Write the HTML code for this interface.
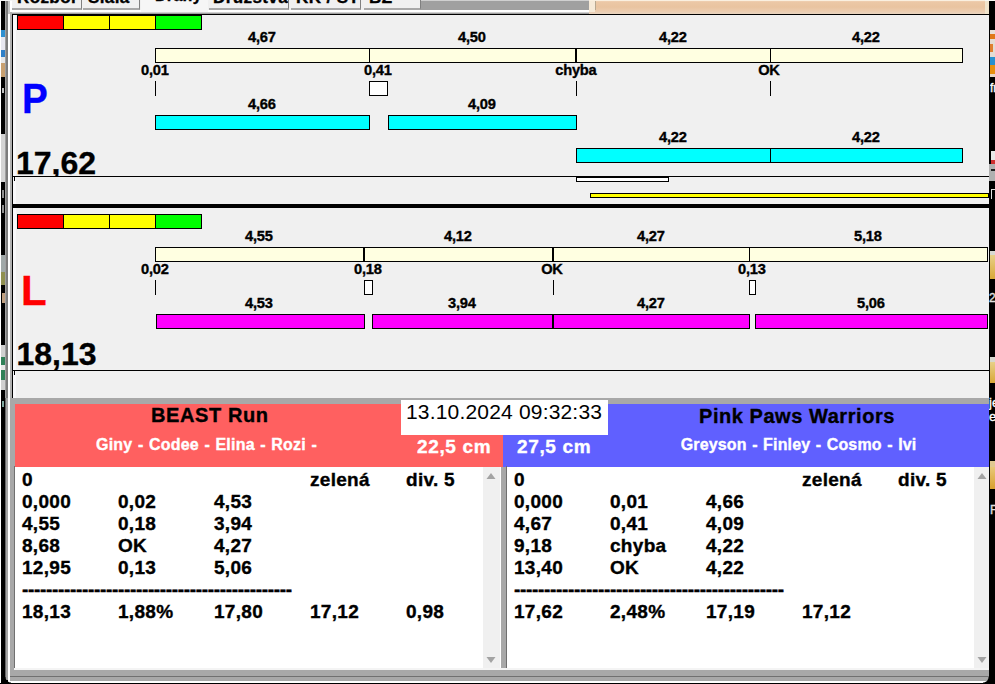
<!DOCTYPE html>
<html><head><meta charset="utf-8"><title>UI</title>
<style>
html,body{margin:0;padding:0;background:#f0f0f0;overflow:hidden}
body{width:995px;height:684px;position:relative;font-family:"Liberation Sans",sans-serif}
.k{position:absolute;background:#000}
.b{position:absolute;box-sizing:border-box;border:1px solid #000}
.t{position:absolute;font-family:"Liberation Sans",sans-serif;white-space:nowrap;-webkit-text-stroke:0.35px currentColor}
</style></head><body>
<div class="k" style="left:0;top:0;width:995px;height:684px;background:#f0f0f0"></div>
<div class="k" style="left:0;top:0;width:1px;height:684px;background:#fff"></div>
<div class="k" style="left:1px;top:0;width:4px;height:684px;background:#000"></div>
<div class="k" style="left:5px;top:0;width:1px;height:684px;background:#a0a0a0"></div>
<div class="k" style="left:6px;top:0;width:2px;height:684px;background:#7c7c7c"></div>
<div class="k" style="left:5px;top:398px;width:1px;height:286px;background:#686868"></div>
<div class="k" style="left:6px;top:398px;width:2px;height:286px;background:#a4a4a4"></div>
<div class="k" style="left:8px;top:0;width:2px;height:684px;background:#fff"></div>
<div class="k" style="left:10px;top:0;width:2px;height:684px;background:#b0b0b0"></div>
<div class="k" style="left:8px;top:0;width:2px;height:14px;background:#c4c4c4"></div>
<div class="k" style="left:10px;top:0;width:2px;height:12px;background:#fff"></div>
<div class="k" style="left:989px;top:0;width:6px;height:684px;background:#000"></div>
<div class="k" style="left:12px;top:0;width:977px;height:10px;background:#f0f0f0"></div>
<div class="k" style="left:12px;top:10px;width:977px;height:2px;background:#fff"></div>
<div class="k" style="left:12px;top:12px;width:977px;height:1px;background:#d0d0d0"></div>
<div class="k" style="left:12px;top:13px;width:977px;height:1px;background:#a0a0a0"></div>
<div class="k" style="left:421px;top:0;width:168px;height:10px;background:#a0a0a0"></div>
<div class="k" style="left:589px;top:0;width:400px;height:14px;background:linear-gradient(#f4dcc4 0,#ecc8a6 2px,#e9c4a0 7px,#ecccae 11px,#e8d4c0 14px)"></div>
<div class="k" style="left:589px;top:0;width:6px;height:12px;background:#f6ead8"></div>
<div class="k" style="left:595px;top:1px;width:1px;height:9px;background:#b8a890"></div>
<div class="k" style="left:12px;top:0;width:70px;height:10px;background:#f0f0f0;overflow:hidden;box-sizing:border-box;border-right:1px solid #808080;border-bottom:2px solid #a8a8a8"><div class="t" style="left:5px;top:-10.69px;font-size:17px;line-height:17px;letter-spacing:0.4px;font-weight:bold;color:#000">Rozbor</div></div>
<div class="k" style="left:83px;top:0;width:57px;height:10px;background:#f0f0f0;overflow:hidden;box-sizing:border-box;border-right:1px solid #808080;border-bottom:2px solid #a8a8a8"><div class="t" style="left:5px;top:-10.69px;font-size:17px;line-height:17px;letter-spacing:0.4px;font-weight:bold;color:#000">Síala</div></div>
<div class="k" style="left:141px;top:0;width:67px;height:12px;background:#f6f6f6;overflow:hidden"><div class="t" style="left:14px;top:-11.84px;font-size:16px;line-height:16px;letter-spacing:0.3px;font-weight:bold;color:#000">Dráhy</div></div>
<div class="k" style="left:209px;top:0;width:80px;height:10px;background:#f0f0f0;overflow:hidden;box-sizing:border-box;border-right:1px solid #808080;border-bottom:2px solid #a8a8a8"><div class="t" style="left:4px;top:-10.69px;font-size:17px;line-height:17px;letter-spacing:0.4px;font-weight:bold;color:#000">Družstva</div></div>
<div class="k" style="left:291px;top:0;width:70px;height:10px;background:#f0f0f0;overflow:hidden;box-sizing:border-box;border-right:1px solid #808080;border-bottom:2px solid #a8a8a8"><div class="t" style="left:5px;top:-10.69px;font-size:17px;line-height:17px;letter-spacing:0.4px;font-weight:bold;color:#000">KK / ST</div></div>
<div class="k" style="left:364px;top:0;width:57px;height:10px;background:#f0f0f0;overflow:hidden;box-sizing:border-box;border-right:1px solid #808080;border-bottom:2px solid #a8a8a8"><div class="t" style="left:5px;top:-10.69px;font-size:17px;line-height:17px;letter-spacing:0.4px;font-weight:bold;color:#000">BZ</div></div>
<div class="k" style="left:12px;top:14px;width:977px;height:1px;background:#000"></div>
<div class="k" style="left:12px;top:14px;width:1px;height:384px"></div>
<div class="k" style="left:13px;top:15px;width:3px;height:383px;background:#f8f8fa"></div>
<div class="b" style="left:17px;top:15px;width:185px;height:15px;background:#ffff00;"></div><div class="k" style="left:18px;top:16px;width:45px;height:13px;background:#ff0000"></div><div class="k" style="left:63px;top:15px;width:1px;height:15px"></div><div class="k" style="left:156px;top:16px;width:45px;height:13px;background:#00ff00"></div><div class="k" style="left:109px;top:15px;width:1px;height:15px"></div><div class="k" style="left:155px;top:15px;width:1px;height:15px"></div>
<div class="b" style="left:155px;top:48px;width:808px;height:15px;background:#ffffe1;"></div>
<div class="k" style="left:369px;top:48px;width:1px;height:15px"></div>
<div class="k" style="left:770px;top:48px;width:1px;height:15px"></div>
<div class="k" style="left:575px;top:48px;width:2px;height:15px"></div>
<div class="t" style="left:61.875px;width:400px;letter-spacing:-0.25px;top:29.98px;font-size:14.67px;line-height:14.67px;height:20.67px;color:#000;font-weight:bold;text-align:center">4,67</div>
<div class="t" style="left:271.875px;width:400px;letter-spacing:-0.25px;top:29.98px;font-size:14.67px;line-height:14.67px;height:20.67px;color:#000;font-weight:bold;text-align:center">4,50</div>
<div class="t" style="left:472.875px;width:400px;letter-spacing:-0.25px;top:29.98px;font-size:14.67px;line-height:14.67px;height:20.67px;color:#000;font-weight:bold;text-align:center">4,22</div>
<div class="t" style="left:665.875px;width:400px;letter-spacing:-0.25px;top:29.98px;font-size:14.67px;line-height:14.67px;height:20.67px;color:#000;font-weight:bold;text-align:center">4,22</div>
<div class="t" style="left:-45.125px;width:400px;letter-spacing:-0.25px;top:62.98px;font-size:14.67px;line-height:14.67px;height:20.67px;color:#000;font-weight:bold;text-align:center">0,01</div>
<div class="t" style="left:177.875px;width:400px;letter-spacing:-0.25px;top:62.98px;font-size:14.67px;line-height:14.67px;height:20.67px;color:#000;font-weight:bold;text-align:center">0,41</div>
<div class="t" style="left:375.875px;width:400px;letter-spacing:-0.25px;top:62.98px;font-size:14.67px;line-height:14.67px;height:20.67px;color:#000;font-weight:bold;text-align:center">chyba</div>
<div class="t" style="left:568.875px;width:400px;letter-spacing:-0.25px;top:62.98px;font-size:14.67px;line-height:14.67px;height:20.67px;color:#000;font-weight:bold;text-align:center">OK</div>
<div class="k" style="left:155px;top:81px;width:1px;height:15px"></div>
<div class="k" style="left:576px;top:81px;width:1px;height:15px"></div>
<div class="k" style="left:770px;top:81px;width:1px;height:15px"></div>
<div class="b" style="left:369px;top:81px;width:19px;height:15px;background:#fff;"></div>
<div class="t" style="transform:scaleX(0.92);transform-origin:0 0;letter-spacing:0px;left:21.5px;top:78.45px;font-size:42px;line-height:42px;height:50px;color:#0000ff;font-weight:bold;white-space:pre">P</div>
<div class="t" style="left:61.875px;width:400px;letter-spacing:-0.25px;top:96.98px;font-size:14.67px;line-height:14.67px;height:20.67px;color:#000;font-weight:bold;text-align:center">4,66</div>
<div class="t" style="left:281.875px;width:400px;letter-spacing:-0.25px;top:96.98px;font-size:14.67px;line-height:14.67px;height:20.67px;color:#000;font-weight:bold;text-align:center">4,09</div>
<div class="b" style="left:155px;top:115px;width:215px;height:15px;background:#00ffff;"></div>
<div class="b" style="left:388px;top:115px;width:189px;height:15px;background:#00ffff;"></div>
<div class="t" style="left:472.875px;width:400px;letter-spacing:-0.25px;top:129.98px;font-size:14.67px;line-height:14.67px;height:20.67px;color:#000;font-weight:bold;text-align:center">4,22</div>
<div class="t" style="left:665.875px;width:400px;letter-spacing:-0.25px;top:129.98px;font-size:14.67px;line-height:14.67px;height:20.67px;color:#000;font-weight:bold;text-align:center">4,22</div>
<div class="b" style="left:576px;top:148px;width:387px;height:15px;background:#00ffff;"></div>
<div class="k" style="left:770px;top:148px;width:1px;height:15px"></div>
<div class="k" style="left:13px;top:140px;width:200px;height:36px;background:none;overflow:hidden"><div class="t" style="letter-spacing:0px;left:3px;top:6.91px;font-size:32px;line-height:32px;height:40px;color:#000;font-weight:bold;white-space:pre">17,62</div></div>
<div class="k" style="left:13px;top:176px;width:976px;height:1px;background:#000"></div>
<div class="k" style="left:14px;top:177px;width:1px;height:4px"></div>
<div class="b" style="left:576px;top:177px;width:93px;height:5px;background:#fff;"></div>
<div class="b" style="left:590px;top:193px;width:399px;height:5px;background:#ffff00;"></div>
<div class="k" style="left:12px;top:204px;width:977px;height:4px;background:#000"></div>
<div class="b" style="left:17px;top:214px;width:185px;height:15px;background:#ffff00;"></div><div class="k" style="left:18px;top:215px;width:45px;height:13px;background:#ff0000"></div><div class="k" style="left:63px;top:214px;width:1px;height:15px"></div><div class="k" style="left:156px;top:215px;width:45px;height:13px;background:#00ff00"></div><div class="k" style="left:109px;top:214px;width:1px;height:15px"></div><div class="k" style="left:155px;top:214px;width:1px;height:15px"></div>
<div class="b" style="left:155px;top:247px;width:833px;height:15px;background:#ffffe1;"></div>
<div class="k" style="left:363px;top:247px;width:2px;height:15px"></div>
<div class="k" style="left:552px;top:247px;width:2px;height:15px"></div>
<div class="k" style="left:749px;top:247px;width:1px;height:15px"></div>
<div class="t" style="left:58.875px;width:400px;letter-spacing:-0.25px;top:228.98px;font-size:14.67px;line-height:14.67px;height:20.67px;color:#000;font-weight:bold;text-align:center">4,55</div>
<div class="t" style="left:257.875px;width:400px;letter-spacing:-0.25px;top:228.98px;font-size:14.67px;line-height:14.67px;height:20.67px;color:#000;font-weight:bold;text-align:center">4,12</div>
<div class="t" style="left:450.875px;width:400px;letter-spacing:-0.25px;top:228.98px;font-size:14.67px;line-height:14.67px;height:20.67px;color:#000;font-weight:bold;text-align:center">4,27</div>
<div class="t" style="left:667.875px;width:400px;letter-spacing:-0.25px;top:228.98px;font-size:14.67px;line-height:14.67px;height:20.67px;color:#000;font-weight:bold;text-align:center">5,18</div>
<div class="t" style="left:-45.125px;width:400px;letter-spacing:-0.25px;top:261.98px;font-size:14.67px;line-height:14.67px;height:20.67px;color:#000;font-weight:bold;text-align:center">0,02</div>
<div class="t" style="left:167.875px;width:400px;letter-spacing:-0.25px;top:261.98px;font-size:14.67px;line-height:14.67px;height:20.67px;color:#000;font-weight:bold;text-align:center">0,18</div>
<div class="t" style="left:351.875px;width:400px;letter-spacing:-0.25px;top:261.98px;font-size:14.67px;line-height:14.67px;height:20.67px;color:#000;font-weight:bold;text-align:center">OK</div>
<div class="t" style="left:551.875px;width:400px;letter-spacing:-0.25px;top:261.98px;font-size:14.67px;line-height:14.67px;height:20.67px;color:#000;font-weight:bold;text-align:center">0,13</div>
<div class="k" style="left:155px;top:280px;width:1px;height:15px"></div>
<div class="k" style="left:553px;top:280px;width:1px;height:15px"></div>
<div class="b" style="left:364px;top:280px;width:9px;height:15px;background:#fff;"></div>
<div class="b" style="left:749px;top:280px;width:7px;height:15px;background:#fff;"></div>
<div class="t" style="letter-spacing:0px;left:21px;top:270.45px;font-size:42px;line-height:42px;height:50px;color:#ff0000;font-weight:bold;white-space:pre">L</div>
<div class="t" style="left:58.875px;width:400px;letter-spacing:-0.25px;top:295.98px;font-size:14.67px;line-height:14.67px;height:20.67px;color:#000;font-weight:bold;text-align:center">4,53</div>
<div class="t" style="left:261.875px;width:400px;letter-spacing:-0.25px;top:295.98px;font-size:14.67px;line-height:14.67px;height:20.67px;color:#000;font-weight:bold;text-align:center">3,94</div>
<div class="t" style="left:450.875px;width:400px;letter-spacing:-0.25px;top:295.98px;font-size:14.67px;line-height:14.67px;height:20.67px;color:#000;font-weight:bold;text-align:center">4,27</div>
<div class="t" style="left:670.875px;width:400px;letter-spacing:-0.25px;top:295.98px;font-size:14.67px;line-height:14.67px;height:20.67px;color:#000;font-weight:bold;text-align:center">5,06</div>
<div class="b" style="left:156px;top:314px;width:209px;height:15px;background:#ff00ff;"></div>
<div class="b" style="left:372px;top:314px;width:378px;height:15px;background:#ff00ff;"></div>
<div class="k" style="left:552px;top:314px;width:2px;height:15px"></div>
<div class="b" style="left:755px;top:314px;width:233px;height:15px;background:#ff00ff;"></div>
<div class="t" style="letter-spacing:0px;left:16.5px;top:337.91px;font-size:32px;line-height:32px;height:40px;color:#000;font-weight:bold;white-space:pre">18,13</div>
<div class="k" style="left:13px;top:370px;width:976px;height:1px;background:#000"></div>
<div class="k" style="left:14px;top:371px;width:1px;height:4px"></div>
<div class="k" style="left:10px;top:398px;width:979px;height:286px;background:#a8a8a8"></div>
<div class="k" style="left:15px;top:404px;width:488px;height:63px;background:#ff6060"></div>
<div class="k" style="left:503px;top:404px;width:486px;height:63px;background:#6060ff"></div>
<div class="k" style="left:401px;top:400px;width:207px;height:35px;background:#fff"></div>
<div class="t" style="-webkit-text-stroke:0;letter-spacing:0.18px;left:406px;top:401.22px;font-size:21px;line-height:21px;height:29px;color:#000;font-weight:normal;white-space:pre">13.10.2024 09:32:33</div>
<div class="t" style="left:9.8px;width:400px;letter-spacing:0.6px;top:405.07px;font-size:20px;line-height:20px;height:26px;color:#000;font-weight:bold;text-align:center">BEAST Run</div>
<div class="t" style="left:596.975px;width:400px;letter-spacing:0.55px;top:405.57px;font-size:20px;line-height:20px;height:26px;color:#000;font-weight:bold;text-align:center">Pink Paws Warriors</div>
<div class="t" style="word-spacing:0.9px;left:6.500000000000005px;width:400px;letter-spacing:0.2px;top:436.66px;font-size:16px;line-height:16px;height:22px;color:#fff;font-weight:bold;text-align:center">Giny - Codee - Elina - Rozi -</div>
<div class="t" style="word-spacing:0.9px;left:598.575px;width:400px;letter-spacing:0.15px;top:436.66px;font-size:16px;line-height:16px;height:22px;color:#fff;font-weight:bold;text-align:center">Greyson - Finley - Cosmo - Ivi</div>
<div class="t" style="letter-spacing:0.65px;left:417px;top:437.42px;font-size:19px;line-height:19px;height:27px;color:#fff;font-weight:bold;white-space:pre">22,5 cm</div>
<div class="t" style="letter-spacing:0.65px;left:517px;top:437.42px;font-size:19px;line-height:19px;height:27px;color:#fff;font-weight:bold;white-space:pre">27,5 cm</div>
<div class="k" style="left:14px;top:466px;width:1px;height:203px;background:#707070"></div>
<div class="k" style="left:15px;top:467px;width:486px;height:201px;background:#fff"></div>
<div class="k" style="left:506px;top:466px;width:1px;height:203px;background:#707070"></div>
<div class="k" style="left:507px;top:467px;width:482px;height:201px;background:#fff"></div>
<div class="k" style="left:14px;top:668px;width:975px;height:2px;background:#f4f4f4"></div>
<div class="k" style="left:10px;top:676px;width:979px;height:1px;background:#707070"></div>
<div class="k" style="left:8px;top:681px;width:981px;height:2px;background:#fff"></div>
<div class="k" style="left:0px;top:683px;width:995px;height:1px;background:#000"></div>
<div class="k" style="left:5px;top:680px;width:3px;height:3px;background:#000"></div>
<div class="k" style="left:483px;top:467px;width:17px;height:201px;background:#f0f0f0"></div><svg class="k" style="left:483px;top:467px;background:none" width="17" height="201"><path d="M3.5 12 L8 6 L12.5 12 Z" fill="#a3a3a3"/><path d="M3.5 190 L8 196 L12.5 190 Z" fill="#a3a3a3"/></svg>
<div class="k" style="left:974px;top:467px;width:17px;height:201px;background:#f0f0f0"></div><svg class="k" style="left:974px;top:467px;background:none" width="17" height="201"><path d="M3.5 12 L8 6 L12.5 12 Z" fill="#a3a3a3"/><path d="M3.5 190 L8 196 L12.5 190 Z" fill="#a3a3a3"/></svg>
<div class="t" style="letter-spacing:0.3px;left:22px;top:469.92px;font-size:19px;line-height:19px;height:27px;color:#000;font-weight:bold;white-space:pre">0</div><div class="t" style="letter-spacing:0.3px;left:310px;top:469.92px;font-size:19px;line-height:19px;height:27px;color:#000;font-weight:bold;white-space:pre">zelená</div><div class="t" style="letter-spacing:0.3px;left:406px;top:469.92px;font-size:19px;line-height:19px;height:27px;color:#000;font-weight:bold;white-space:pre">div. 5</div><div class="t" style="letter-spacing:0.3px;left:22px;top:491.92px;font-size:19px;line-height:19px;height:27px;color:#000;font-weight:bold;white-space:pre">0,000</div><div class="t" style="letter-spacing:0.3px;left:118px;top:491.92px;font-size:19px;line-height:19px;height:27px;color:#000;font-weight:bold;white-space:pre">0,02</div><div class="t" style="letter-spacing:0.3px;left:214px;top:491.92px;font-size:19px;line-height:19px;height:27px;color:#000;font-weight:bold;white-space:pre">4,53</div><div class="t" style="letter-spacing:0.3px;left:22px;top:513.92px;font-size:19px;line-height:19px;height:27px;color:#000;font-weight:bold;white-space:pre">4,55</div><div class="t" style="letter-spacing:0.3px;left:118px;top:513.92px;font-size:19px;line-height:19px;height:27px;color:#000;font-weight:bold;white-space:pre">0,18</div><div class="t" style="letter-spacing:0.3px;left:214px;top:513.92px;font-size:19px;line-height:19px;height:27px;color:#000;font-weight:bold;white-space:pre">3,94</div><div class="t" style="letter-spacing:0.3px;left:22px;top:535.92px;font-size:19px;line-height:19px;height:27px;color:#000;font-weight:bold;white-space:pre">8,68</div><div class="t" style="letter-spacing:0.3px;left:118px;top:535.92px;font-size:19px;line-height:19px;height:27px;color:#000;font-weight:bold;white-space:pre">OK</div><div class="t" style="letter-spacing:0.3px;left:214px;top:535.92px;font-size:19px;line-height:19px;height:27px;color:#000;font-weight:bold;white-space:pre">4,27</div><div class="t" style="letter-spacing:0.3px;left:22px;top:557.92px;font-size:19px;line-height:19px;height:27px;color:#000;font-weight:bold;white-space:pre">12,95</div><div class="t" style="letter-spacing:0.3px;left:118px;top:557.92px;font-size:19px;line-height:19px;height:27px;color:#000;font-weight:bold;white-space:pre">0,13</div><div class="t" style="letter-spacing:0.3px;left:214px;top:557.92px;font-size:19px;line-height:19px;height:27px;color:#000;font-weight:bold;white-space:pre">5,06</div><div class="t" style="letter-spacing:-0.333px;left:22px;top:579.92px;font-size:19px;line-height:19px;height:27px;color:#000;font-weight:bold;white-space:pre">---------------------------------------------</div><div class="t" style="letter-spacing:0.3px;left:22px;top:601.92px;font-size:19px;line-height:19px;height:27px;color:#000;font-weight:bold;white-space:pre">18,13</div><div class="t" style="letter-spacing:0.3px;left:118px;top:601.92px;font-size:19px;line-height:19px;height:27px;color:#000;font-weight:bold;white-space:pre">1,88%</div><div class="t" style="letter-spacing:0.3px;left:214px;top:601.92px;font-size:19px;line-height:19px;height:27px;color:#000;font-weight:bold;white-space:pre">17,80</div><div class="t" style="letter-spacing:0.3px;left:310px;top:601.92px;font-size:19px;line-height:19px;height:27px;color:#000;font-weight:bold;white-space:pre">17,12</div><div class="t" style="letter-spacing:0.3px;left:406px;top:601.92px;font-size:19px;line-height:19px;height:27px;color:#000;font-weight:bold;white-space:pre">0,98</div>
<div class="t" style="letter-spacing:0.3px;left:514px;top:469.92px;font-size:19px;line-height:19px;height:27px;color:#000;font-weight:bold;white-space:pre">0</div><div class="t" style="letter-spacing:0.3px;left:802px;top:469.92px;font-size:19px;line-height:19px;height:27px;color:#000;font-weight:bold;white-space:pre">zelená</div><div class="t" style="letter-spacing:0.3px;left:898px;top:469.92px;font-size:19px;line-height:19px;height:27px;color:#000;font-weight:bold;white-space:pre">div. 5</div><div class="t" style="letter-spacing:0.3px;left:514px;top:491.92px;font-size:19px;line-height:19px;height:27px;color:#000;font-weight:bold;white-space:pre">0,000</div><div class="t" style="letter-spacing:0.3px;left:610px;top:491.92px;font-size:19px;line-height:19px;height:27px;color:#000;font-weight:bold;white-space:pre">0,01</div><div class="t" style="letter-spacing:0.3px;left:706px;top:491.92px;font-size:19px;line-height:19px;height:27px;color:#000;font-weight:bold;white-space:pre">4,66</div><div class="t" style="letter-spacing:0.3px;left:514px;top:513.92px;font-size:19px;line-height:19px;height:27px;color:#000;font-weight:bold;white-space:pre">4,67</div><div class="t" style="letter-spacing:0.3px;left:610px;top:513.92px;font-size:19px;line-height:19px;height:27px;color:#000;font-weight:bold;white-space:pre">0,41</div><div class="t" style="letter-spacing:0.3px;left:706px;top:513.92px;font-size:19px;line-height:19px;height:27px;color:#000;font-weight:bold;white-space:pre">4,09</div><div class="t" style="letter-spacing:0.3px;left:514px;top:535.92px;font-size:19px;line-height:19px;height:27px;color:#000;font-weight:bold;white-space:pre">9,18</div><div class="t" style="letter-spacing:0.3px;left:610px;top:535.92px;font-size:19px;line-height:19px;height:27px;color:#000;font-weight:bold;white-space:pre">chyba</div><div class="t" style="letter-spacing:0.3px;left:706px;top:535.92px;font-size:19px;line-height:19px;height:27px;color:#000;font-weight:bold;white-space:pre">4,22</div><div class="t" style="letter-spacing:0.3px;left:514px;top:557.92px;font-size:19px;line-height:19px;height:27px;color:#000;font-weight:bold;white-space:pre">13,40</div><div class="t" style="letter-spacing:0.3px;left:610px;top:557.92px;font-size:19px;line-height:19px;height:27px;color:#000;font-weight:bold;white-space:pre">OK</div><div class="t" style="letter-spacing:0.3px;left:706px;top:557.92px;font-size:19px;line-height:19px;height:27px;color:#000;font-weight:bold;white-space:pre">4,22</div><div class="t" style="letter-spacing:-0.333px;left:514px;top:579.92px;font-size:19px;line-height:19px;height:27px;color:#000;font-weight:bold;white-space:pre">---------------------------------------------</div><div class="t" style="letter-spacing:0.3px;left:514px;top:601.92px;font-size:19px;line-height:19px;height:27px;color:#000;font-weight:bold;white-space:pre">17,62</div><div class="t" style="letter-spacing:0.3px;left:610px;top:601.92px;font-size:19px;line-height:19px;height:27px;color:#000;font-weight:bold;white-space:pre">2,48%</div><div class="t" style="letter-spacing:0.3px;left:706px;top:601.92px;font-size:19px;line-height:19px;height:27px;color:#000;font-weight:bold;white-space:pre">17,19</div><div class="t" style="letter-spacing:0.3px;left:802px;top:601.92px;font-size:19px;line-height:19px;height:27px;color:#000;font-weight:bold;white-space:pre">17,12</div>
<div class="k" style="left:989px;top:0;width:6px;height:684px;background:#000"></div>
<div class="k" style="left:990px;top:30px;width:5px;height:4px;background:#e8e0d8"></div>
<div class="k" style="left:990px;top:34px;width:5px;height:5px;background:#e07818"></div>
<div class="k" style="left:990px;top:39px;width:5px;height:18px;background:#e4dcd4"></div>
<div class="k" style="left:990px;top:44px;width:3px;height:8px;background:#e08030"></div>
<div class="k" style="left:990px;top:57px;width:5px;height:8px;background:#2890d0"></div>
<div class="k" style="left:990px;top:65px;width:5px;height:9px;background:#e89010"></div>
<div class="k" style="left:990px;top:74px;width:5px;height:3px;background:#e8d8c8"></div>
<div class="t" style="left:990px;top:81px;font-size:12px;line-height:14px;color:#fff;width:5px;overflow:hidden">fr</div>
<div class="k" style="left:991px;top:151px;width:4px;height:9px;background:#e8e8e8"></div>
<div class="k" style="left:991px;top:160px;width:4px;height:4px;background:#d03030"></div>
<div class="k" style="left:989px;top:164px;width:6px;height:17px;background:#b0b0b0"></div>
<div class="k" style="left:991px;top:169px;width:4px;height:2px;background:#202020"></div>
<div class="k" style="left:991px;top:189px;width:1px;height:10px;background:#e0e0e0"></div>
<div class="k" style="left:991px;top:189px;width:4px;height:1px;background:#e0e0e0"></div>
<div class="k" style="left:990px;top:251px;width:5px;height:4px;background:#d8d8d0"></div>
<div class="k" style="left:990px;top:255px;width:5px;height:24px;background:linear-gradient(#e8d088,#d8a838)"></div>
<div class="t" style="left:989px;top:291px;font-size:12px;line-height:14px;color:#e0e0e0;width:6px;overflow:hidden">20</div>
<div class="k" style="left:990px;top:357px;width:5px;height:5px;background:#d8d8d0"></div>
<div class="k" style="left:990px;top:362px;width:5px;height:21px;background:linear-gradient(#e8d088,#d8a838)"></div>
<div class="t" style="left:989px;top:396px;font-size:13px;line-height:14px;color:#fff;width:6px;overflow:hidden">je</div>
<div class="t" style="left:989px;top:410px;font-size:13px;line-height:14px;color:#fff;width:6px;overflow:hidden">e</div>
<div class="k" style="left:990px;top:461px;width:5px;height:6px;background:#e0c890"></div>
<div class="k" style="left:990px;top:467px;width:5px;height:22px;background:linear-gradient(#e8c878,#d8a030)"></div>
<div class="t" style="left:990px;top:503px;font-size:12px;line-height:14px;color:#e0e0e0;width:5px;overflow:hidden">F</div>
<div class="k" style="left:1px;top:30px;width:4px;height:7px;background:#3090d0"></div>
<div class="k" style="left:1px;top:37px;width:4px;height:13px;background:#e8e8f0"></div>
<div class="k" style="left:1px;top:50px;width:4px;height:7px;background:#3080c8"></div>
<div class="k" style="left:1px;top:57px;width:4px;height:6px;background:#e8e8e8"></div>
<div class="k" style="left:1px;top:63px;width:4px;height:14px;background:#c8a070"></div>
<div class="k" style="left:2px;top:88px;width:2px;height:5px;background:#c0c0c0"></div>
<div class="k" style="left:1px;top:134px;width:4px;height:48px;background:#d4d4d4"></div>
<div class="k" style="left:2px;top:190px;width:2px;height:8px;background:#909090"></div>
<div class="k" style="left:2px;top:205px;width:2px;height:8px;background:#909090"></div>
<div class="k" style="left:1px;top:255px;width:4px;height:17px;background:#a0a8a8"></div>
<div class="k" style="left:1px;top:272px;width:4px;height:13px;background:#909050"></div>
<div class="k" style="left:2px;top:293px;width:3px;height:10px;background:#c0a080"></div>
<div class="k" style="left:1px;top:345px;width:4px;height:12px;background:#d0d0d0"></div>
<div class="k" style="left:1px;top:357px;width:4px;height:8px;background:#308058"></div>
<div class="k" style="left:1px;top:365px;width:4px;height:5px;background:#e8e8e8"></div>
<div class="k" style="left:1px;top:370px;width:4px;height:10px;background:#308058"></div>
<div class="k" style="left:1px;top:380px;width:4px;height:10px;background:#d0d0d0"></div>
<div class="k" style="left:2px;top:401px;width:2px;height:6px;background:#80a8a0"></div>
<div class="k" style="left:983px;top:677px;width:6px;height:6px;background:radial-gradient(circle at 0 0, rgba(0,0,0,0) 5px, #000 6px)"></div>
<div class="k" style="left:5px;top:677px;width:6px;height:6px;background:radial-gradient(circle at 100% 0, rgba(0,0,0,0) 5px, #000 6px)"></div>
<div class="k" style="left:0px;top:0px;width:12px;height:1px;background:#f4f4f4"></div>
<div class="k" style="left:985px;top:0px;width:10px;height:1px;background:#f8f8f4"></div>
<div class="k" style="left:421px;top:0px;width:168px;height:1px;background:#d0d0d0"></div>
<div class="k" style="left:589px;top:0px;width:396px;height:1px;background:#faf0e0"></div>
<div class="k" style="left:985px;top:1px;width:4px;height:13px;background:#f0e4cc"></div>
</body></html>
